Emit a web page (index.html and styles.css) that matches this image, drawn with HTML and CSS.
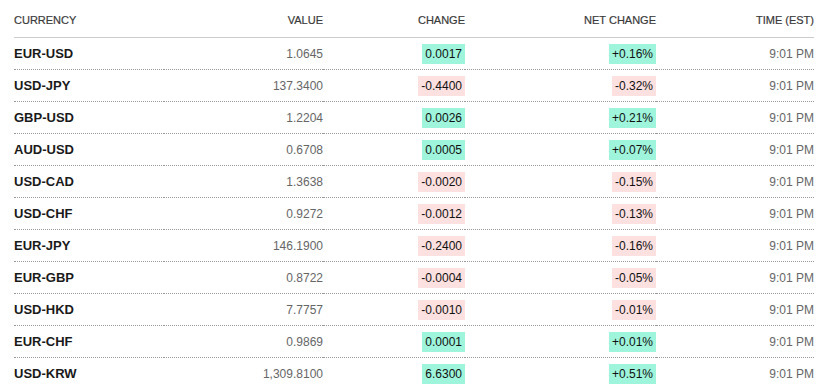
FILE: index.html
```html
<!DOCTYPE html>
<html lang="en">
<head>
  <meta charset="UTF-8" />
  <meta name="viewport" content="width=device-width, initial-scale=1.0"/>
  <title>Currencies</title>
  <link rel="stylesheet" href="styles.css">
</head>
<body>

  <!-- Currency quotes table -->
  <table class="quotes">
    <colgroup>
      <col class="col-name">
      <col class="col-value">
      <col class="col-change">
      <col class="col-net">
      <col class="col-time">
    </colgroup>
    <thead>
      <tr>
        <th class="left">Currency</th>
        <th>Value</th>
        <th>Change</th>
        <th>Net Change</th>
        <th>Time (EST)</th>
      </tr>
    </thead>
    <tbody>
      <tr>
        <td class="name">EUR-USD</td>
        <td class="value">1.0645</td>
        <td><span class="tag up">0.0017</span></td>
        <td><span class="tag up">+0.16%</span></td>
        <td class="time">9:01 PM</td>
      </tr>
      <tr>
        <td class="name">USD-JPY</td>
        <td class="value">137.3400</td>
        <td><span class="tag down">-0.4400</span></td>
        <td><span class="tag down">-0.32%</span></td>
        <td class="time">9:01 PM</td>
      </tr>
      <tr>
        <td class="name">GBP-USD</td>
        <td class="value">1.2204</td>
        <td><span class="tag up">0.0026</span></td>
        <td><span class="tag up">+0.21%</span></td>
        <td class="time">9:01 PM</td>
      </tr>
      <tr>
        <td class="name">AUD-USD</td>
        <td class="value">0.6708</td>
        <td><span class="tag up">0.0005</span></td>
        <td><span class="tag up">+0.07%</span></td>
        <td class="time">9:01 PM</td>
      </tr>
      <tr>
        <td class="name">USD-CAD</td>
        <td class="value">1.3638</td>
        <td><span class="tag down">-0.0020</span></td>
        <td><span class="tag down">-0.15%</span></td>
        <td class="time">9:01 PM</td>
      </tr>
      <tr>
        <td class="name">USD-CHF</td>
        <td class="value">0.9272</td>
        <td><span class="tag down">-0.0012</span></td>
        <td><span class="tag down">-0.13%</span></td>
        <td class="time">9:01 PM</td>
      </tr>
      <tr>
        <td class="name">EUR-JPY</td>
        <td class="value">146.1900</td>
        <td><span class="tag down">-0.2400</span></td>
        <td><span class="tag down">-0.16%</span></td>
        <td class="time">9:01 PM</td>
      </tr>
      <tr>
        <td class="name">EUR-GBP</td>
        <td class="value">0.8722</td>
        <td><span class="tag down">-0.0004</span></td>
        <td><span class="tag down">-0.05%</span></td>
        <td class="time">9:01 PM</td>
      </tr>
      <tr>
        <td class="name">USD-HKD</td>
        <td class="value">7.7757</td>
        <td><span class="tag down">-0.0010</span></td>
        <td><span class="tag down">-0.01%</span></td>
        <td class="time">9:01 PM</td>
      </tr>
      <tr>
        <td class="name">EUR-CHF</td>
        <td class="value">0.9869</td>
        <td><span class="tag up">0.0001</span></td>
        <td><span class="tag up">+0.01%</span></td>
        <td class="time">9:01 PM</td>
      </tr>
      <tr>
        <td class="name">USD-KRW</td>
        <td class="value">1,309.8100</td>
        <td><span class="tag up">6.6300</span></td>
        <td><span class="tag up">+0.51%</span></td>
        <td class="time">9:01 PM</td>
      </tr>
    </tbody>
  </table>

</body>
</html>
```

FILE: styles.css
```css
body {
  font-family: 'Liberation Sans', Arial, sans-serif;
  background: #fff;
  margin: 0;
  padding: 0 12px 0 14px;
  color: #222;
}

.quotes {
  width: 800px;
  table-layout: fixed;
  border-collapse: collapse;
}

.col-name { width: 150px; }
.col-value { width: 159px; }
.col-change { width: 142px; }
.col-net { width: 191px; }
.col-time { width: 158px; }

th {
  font-size: 11px;
  font-weight: normal;
  line-height: 14px;
  text-transform: uppercase;
  text-align: right;
  color: #3a3a3a;
  padding: 13px 0 10px;
  border-bottom: 1px solid #ccc;
  -webkit-text-stroke: 0.2px #3a3a3a;
}

th.left {
  text-align: left;
}

td {
  height: 31px;
  padding: 0;
  font-size: 12px;
  text-align: right;
  border-bottom: 1px dotted #999;
}

tbody tr:last-child td {
  border-bottom: none;
}

td.name {
  text-align: left;
  font-size: 13px;
  font-weight: bold;
  color: #1a1a1a;
}

td.value,
td.time {
  color: #666;
}

.tag {
  display: inline-block;
  line-height: 20px;
  padding: 0 3px;
  color: #111;
}

.tag.up {
  background-color: #9ef5dc;
}

.tag.down {
  background-color: #fde0e0;
}
```
